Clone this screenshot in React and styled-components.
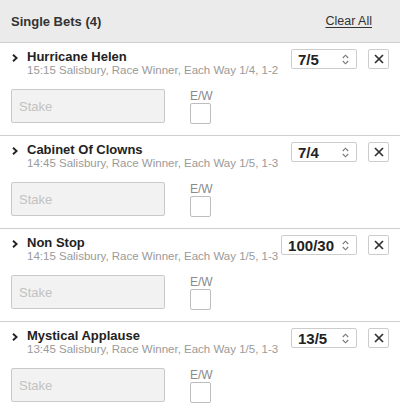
import React from "react";
import styled, { createGlobalStyle } from "styled-components";

const GlobalStyle = createGlobalStyle`
  html, body {
    margin: 0;
    padding: 0;
    background: #ffffff;
  }
  body {
    font-family: "Liberation Sans", Arial, Helvetica, sans-serif;
    color: #222;
  }
`;

const bets = [
  { name: "Hurricane Helen", info: "15:15 Salisbury, Race Winner, Each Way 1/4, 1-2", odds: "7/5" },
  { name: "Cabinet Of Clowns", info: "14:45 Salisbury, Race Winner, Each Way 1/5, 1-3", odds: "7/4" },
  { name: "Non Stop", info: "14:15 Salisbury, Race Winner, Each Way 1/5, 1-3", odds: "100/30" },
  { name: "Mystical Applause", info: "13:45 Salisbury, Race Winner, Each Way 1/5, 1-3", odds: "13/5" },
];

const ChevronRight = () => (
  <svg width="6" height="8" viewBox="0 0 6 8">
    <polyline points="1,0.8 4.6,4 1,7.2" fill="none" stroke="#222" strokeWidth="1.9" />
  </svg>
);

const UpDown = () => (
  <svg width="7" height="11" viewBox="0 0 7 11">
    <polyline points="0.8,4 3.5,1.2 6.2,4" fill="none" stroke="#777" strokeWidth="1.1" />
    <polyline points="0.8,7 3.5,9.8 6.2,7" fill="none" stroke="#777" strokeWidth="1.1" />
  </svg>
);

const CloseIcon = () => (
  <svg width="10" height="10" viewBox="0 0 10 10">
    <line x1="1" y1="1" x2="9" y2="9" stroke="#333" strokeWidth="1.7" />
    <line x1="9" y1="1" x2="1" y2="9" stroke="#333" strokeWidth="1.7" />
  </svg>
);

const BetSlip = () => (
  <Wrapper>
    <Header>
      <Title>Single Bets ({bets.length})</Title>
      <ClearAll>Clear All</ClearAll>
    </Header>
    {bets.map((bet) => (
      <Bet key={bet.name}>
        <TopRow>
          <Selection>
            <Arrow>
              <ChevronRight />
            </Arrow>
            <TextBlock>
              <Name>{bet.name}</Name>
              <Info>{bet.info}</Info>
            </TextBlock>
          </Selection>
          <Controls>
            <OddsSelect>
              <span>{bet.odds}</span>
              <UpDown />
            </OddsSelect>
            <RemoveButton>
              <CloseIcon />
            </RemoveButton>
          </Controls>
        </TopRow>
        <BottomRow>
          <StakeInput placeholder="Stake" />
          <EachWay>
            <EachWayLabel>E/W</EachWayLabel>
            <CheckBox />
          </EachWay>
        </BottomRow>
      </Bet>
    ))}
  </Wrapper>
);

export default function App() {
  return (
    <>
      <GlobalStyle />
      <BetSlip />
    </>
  );
}

const Wrapper = styled.div`
  width: 400px;
  display: flex;
  flex-direction: column;
`;

const Header = styled.div`
  height: 42px;
  display: flex;
  align-items: center;
  justify-content: space-between;
  padding: 0 28px 0 11px;
  background: #ebebeb;
  border-bottom: 1px solid #cfcfcf;
`;

const Title = styled.span`
  font-size: 13px;
  font-weight: bold;
  color: #333;
`;

const ClearAll = styled.span`
  font-size: 12.5px;
  color: #333;
  text-decoration: underline;
  text-underline-offset: 2px;
`;

const Bet = styled.div`
  padding: 6px 11px 11px 11px;
  border-bottom: 1px solid #cfcfcf;
  display: flex;
  flex-direction: column;
`;

const TopRow = styled.div`
  display: flex;
  justify-content: space-between;
  align-items: flex-start;
`;

const Selection = styled.div`
  display: flex;
  align-items: flex-start;
`;

const Arrow = styled.div`
  width: 16px;
  padding: 5px 0 0 1px;
  box-sizing: border-box;
  display: flex;
`;

const TextBlock = styled.div`
  margin-top: 1px;
  display: flex;
  flex-direction: column;
`;

const Name = styled.span`
  font-size: 13px;
  line-height: 13px;
  font-weight: bold;
  color: #222;
`;

const Info = styled.span`
  font-size: 11.5px;
  line-height: 15px;
  color: #9a9a9a;
  white-space: nowrap;
`;

const Controls = styled.div`
  display: flex;
  gap: 11px;
`;

const OddsSelect = styled.div`
  min-width: 66px;
  height: 20px;
  box-sizing: border-box;
  border: 1px solid #cccccc;
  border-radius: 2px;
  padding: 0 7px 0 6px;
  display: flex;
  align-items: center;
  justify-content: space-between;
  gap: 8px;
  font-size: 15px;
  font-weight: bold;
  color: #222;
  background: #fff;
`;

const RemoveButton = styled.div`
  width: 21px;
  height: 20px;
  box-sizing: border-box;
  border: 1px solid #cccccc;
  border-radius: 2px;
  display: flex;
  align-items: center;
  justify-content: center;
  background: #fff;
`;

const BottomRow = styled.div`
  margin-top: 11px;
  display: flex;
  align-items: flex-start;
  gap: 25px;
`;

const StakeInput = styled.input`
  width: 154px;
  height: 34px;
  box-sizing: border-box;
  margin: 0;
  padding: 0 7px;
  border: 1px solid #c9c9c9;
  border-radius: 2px;
  background: #f2f2f2;
  font-family: "Liberation Sans", Arial, sans-serif;
  font-size: 13px;
  color: #333;
  outline: none;
  &::placeholder {
    color: #c2c2c2;
  }
`;

const EachWay = styled.div`
  margin-top: 1px;
  display: flex;
  flex-direction: column;
  gap: 1px;
`;

const EachWayLabel = styled.span`
  font-size: 12px;
  line-height: 12px;
  color: #8a8a8a;
`;

const CheckBox = styled.div`
  width: 21px;
  height: 21px;
  box-sizing: border-box;
  border: 1px solid #bdbdbd;
  border-radius: 2px;
  background: #fff;
`;
